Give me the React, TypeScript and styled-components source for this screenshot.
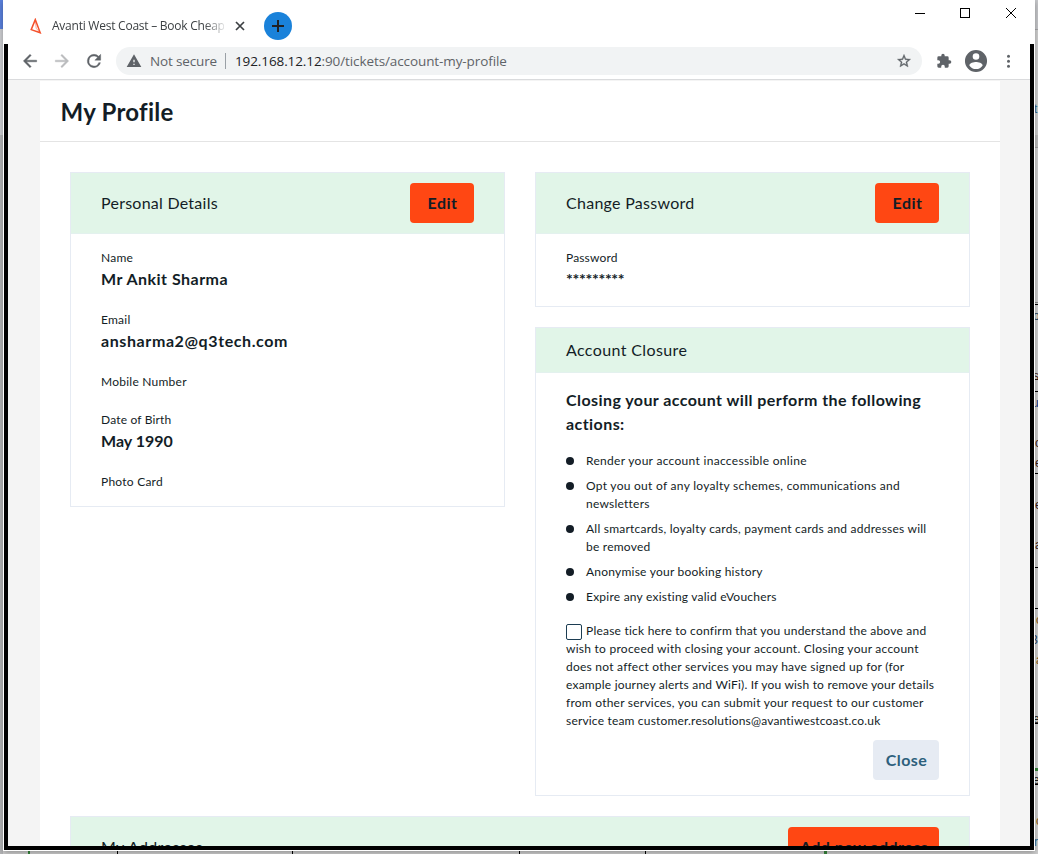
import React from 'react';
import styled, { createGlobalStyle, css } from 'styled-components';

const GlobalStyle = createGlobalStyle`
  * { box-sizing: border-box; }
  html, body { margin: 0; padding: 0; overflow: hidden; }
  body {
    font-family: Lato, 'Open Sans', sans-serif;
    font-variant-ligatures: none;
    color: #131d26;
  }
  h1, h2, h3, p, ul, dl, dt, dd { margin: 0; padding: 0; font-weight: 400; }
`;

/* ---------- desktop behind the window ---------- */
const Desktop = styled.div`
  position: relative;
  width: 1038px;
  height: 854px;
  overflow: hidden;
  background: #d0d0d0;
`;
const Slab = styled.div<{ $x: number; $y: number; $w: number; $h: number; $c: string }>`
  position: absolute;
  left: ${p => p.$x}px;
  top: ${p => p.$y}px;
  width: ${p => p.$w}px;
  height: ${p => p.$h}px;
  background: ${p => p.$c};
`;
const Fragment = styled.span<{ $y: number; $c?: string; $dx?: number }>`
  position: absolute;
  left: ${p => 1033 + (p.$dx || 0)}px;
  top: ${p => p.$y}px;
  font: 12px/14px 'Liberation Sans', sans-serif;
  color: ${p => p.$c || '#3b1c18'};
`;

const slabs: [number, number, number, number, string][] = [
  [0, 0, 3, 29, '#5a80dc'],
  [0, 29, 3, 106, '#cdced2'],
  [0, 135, 3, 719, '#b4b5b7'],
  [1035, 0, 3, 29, '#c6c7ca'],
  [1035, 29, 3, 1, '#a6a6a8'],
  [1035, 135, 3, 12, '#bdbdbd'],
  [1035, 147, 3, 1, '#a2a2a2'],
  [1035, 302, 3, 1, '#8a8a8a'],
  [1035, 304, 3, 1, '#000'],
  [1035, 379, 3, 1, '#000'],
  [1035, 391, 3, 1, '#000'],
  [1035, 473, 3, 1, '#000'],
  [1035, 567, 3, 1, '#000'],
  [1035, 608, 3, 1, '#000'],
  [1035, 723, 3, 1, '#000'],
  [1035, 768, 3, 3, '#37873b'],
  [1035, 784, 3, 1, '#000'],
  [28, 851, 2, 3, '#37873b'],
  [117, 851, 1, 3, '#000'],
  [292, 851, 1, 3, '#000'],
  [519, 851, 1, 3, '#000'],
  [645, 851, 1, 3, '#000'],
  [824, 851, 3, 3, '#37873b'],
];
const fragments: [string, number, string, number][] = [
  ['t', 102, '#2c6a94', 1],
  ['o', 309, '#274a63', 0],
  ['s', 369, '#3b1c18', 0],
  ['u', 396, '#173a80', -1],
  ['o', 436, '#3b1c18', 2],
  ['e', 456, '#3b1c18', 2],
  ['e', 498, '#3b1c18', 2],
  ['a', 538, '#3b1c18', 2],
  ['o', 613, '#8a5a10', 3],
  ['B', 633, '#27486a', -3],
  ['a', 653, '#8a5a10', 3],
  ['e', 712, '#222', 0],
  ['e', 773, '#222', 0],
  ['o', 814, '#8a5a10', 3],
  ['r', 835, '#2c6a94', 1],
];

/* ---------- browser window ---------- */
const Window = styled.div`
  position: absolute;
  left: 3px;
  top: 0;
  width: 1032px;
  height: 851px;
  display: flex;
  flex-direction: column;
  background: #fff;
  box-shadow: 0 2px 6px rgba(0, 0, 0, 0.3);
`;
const TabStrip = styled.div`
  height: 44px;
  flex: none;
  display: flex;
  align-items: flex-start;
  justify-content: space-between;
`;
const Tab = styled.div`
  display: flex;
  align-items: center;
  height: 28px;
  margin: 12px 0 0 26px;
`;
const TabTitle = styled.span`
  margin-left: 9px;
  width: 172px;
  overflow: hidden;
  white-space: nowrap;
  font: 12px/16px 'Open Sans', sans-serif;
  letter-spacing: -0.24px;
  color: #3c4043;
  mask-image: linear-gradient(to right, #000 152px, rgba(0, 0, 0, 0.15) 172px);
`;
const CloseTab = styled.svg`
  margin-left: 11px;
`;
const NewTab = styled.div`
  width: 28px;
  height: 28px;
  margin-left: 19px;
  border-radius: 50%;
  background: #1a82da;
  display: flex;
  align-items: center;
  justify-content: center;
`;
const WindowControls = styled.div`
  display: flex;
  gap: 34px;
  margin: 7px 18px 0 0;
`;
const Frame = styled.div`
  flex: 1;
  min-height: 0;
  margin: 0 1px 1px;
  border: 4px solid #000;
  border-top: 0;
  display: flex;
  flex-direction: column;
  overflow: hidden;
  background: #f4f4f4;
`;
const Toolbar = styled.div`
  height: 36px;
  flex: none;
  display: flex;
  align-items: flex-start;
  background: #fff;
  border-bottom: 1px solid #dadbdd;
  padding: 3px 0 0 12px;
`;
const ToolIcons = styled.div<{ $trailing?: boolean }>`
  display: flex;
  align-items: center;
  height: 28px;
  gap: 12px;
  ${p => p.$trailing && css`
    margin-left: 14px;
    gap: 11px;
  `}
`;
const AddressBar = styled.div`
  display: flex;
  align-items: center;
  width: 806px;
  height: 28px;
  margin-left: 12px;
  padding: 0 10px;
  border-radius: 14px;
  background: #f1f3f4;
  font: 13.5px/20px 'Open Sans', sans-serif;
  color: #5f6368;
`;
const Secure = styled.span`
  margin-left: 8px;
  width: 75px;
  letter-spacing: -0.15px;
  white-space: nowrap;
`;
const Url = styled.span`
  padding-left: 9px;
  flex: 1;
  border-left: 1px solid #9aa0a6;
  line-height: 16px;
  letter-spacing: -0.1px;
  b { font-weight: 400; color: #202124; }
`;

/* ---------- page ---------- */
const Page = styled.main`
  width: 960px;
  flex: 1;
  min-height: 0;
  margin: 1px 0 0 32px;
  background: #fff;
  overflow: hidden;
`;
const PageHead = styled.header`
  height: 61px;
  padding: 14px 0 0 20.5px;
  border-bottom: 1px solid #e4e4e4;
`;
const PageTitle = styled.h1`
  font-size: 24px;
  line-height: 34px;
  font-weight: 700;
  letter-spacing: 0.25px;
`;
const Columns = styled.div`
  display: flex;
  align-items: flex-start;
  gap: 30px;
  padding: 30px 30px 0;
`;
const Column = styled.div`
  display: flex;
  flex-direction: column;
  gap: 20px;
  width: 435px;
`;
const Card = styled.section<{ $h: number }>`
  height: ${p => p.$h}px;
  border: 1px solid #e6ebf3;
`;
const CardHead = styled.header<{ $h: number }>`
  height: ${p => p.$h}px;
  display: flex;
  align-items: center;
  justify-content: space-between;
  padding: 0 30px;
  background: #e1f5e8;
  border-bottom: 1px solid #e3f1ee;
`;
const CardTitle = styled.h2<{ $ls?: number }>`
  padding-bottom: 1px;
  font-size: 16px;
  line-height: 24px;
  letter-spacing: ${p => p.$ls ?? 0.25}px;
`;
const Button = styled.button<{ $w: number; $quiet?: boolean }>`
  width: ${p => p.$w}px;
  height: 40px;
  padding: 0 0 0 1px;
  border: 0;
  border-radius: 4px;
  font: 700 16px/24px Lato, sans-serif;
  letter-spacing: 0.45px;
  color: #131d26;
  background: #ff4713;
  white-space: nowrap;
  ${p => p.$quiet && css`
    color: #2d5f7c;
    background: #e6ebf3;
    letter-spacing: 0.4px;
  `}
`;
const Fields = styled.dl`
  padding: 15px 30px 0;
`;
const Field = styled.div<{ $h: number }>`
  height: ${p => p.$h}px;
`;
const Label = styled.dt<{ $ls?: number }>`
  font-size: 12px;
  line-height: 18px;
  letter-spacing: ${p => p.$ls ?? 0.24}px;
`;
const Value = styled.dd<{ $ls?: number }>`
  font-size: 16px;
  line-height: 24px;
  font-weight: 700;
  letter-spacing: ${p => p.$ls ?? 0}px;
`;
const Closure = styled.div`
  padding: 15px 30px 0;
`;
const ClosureTitle = styled.h3`
  font-size: 16px;
  line-height: 24px;
`;
const Line = styled.span<{ $ls?: number; $strong?: boolean }>`
  display: block;
  white-space: nowrap;
  font-weight: ${p => (p.$strong ? 700 : 400)};
  letter-spacing: ${p => p.$ls ?? 0.23}px;
`;
const Bullets = styled.ul`
  display: flex;
  flex-direction: column;
  gap: 7px;
  margin-top: 16px;
  list-style: none;
  font-size: 12px;
  line-height: 18px;
`;
const Bullet = styled.li`
  display: flex;
  gap: 12px;
  &::before {
    content: '';
    flex: none;
    width: 8px;
    height: 8px;
    margin-top: 5px;
    border-radius: 50%;
    background: #131d26;
  }
`;
const Confirm = styled.div`
  margin-top: 16px;
  font-size: 12px;
  line-height: 18px;
`;
const FirstLine = styled.div`
  display: flex;
  gap: 4px;
  height: 18px;
`;
const Checkbox = styled.span`
  flex: none;
  width: 16px;
  height: 16px;
  margin-top: 2px;
  border: 1px solid #1c3d52;
  border-radius: 2px;
  background: #fff;
`;
const Actions = styled.div`
  display: flex;
  justify-content: flex-end;
  margin-top: 10px;
`;
const Wide = styled.div`
  padding: 20px 30px 0;
`;

export default function App() {
  return (
    <>
      <GlobalStyle />
      <Desktop>
        {slabs.map(([x, y, w, h, c], i) => <Slab key={i} $x={x} $y={y} $w={w} $h={h} $c={c} />)}
        {fragments.map(([t, y, c, dx], i) => <Fragment key={i} $y={y} $c={c} $dx={dx}>{t}</Fragment>)}
        <Window>
          <TabStrip>
            <Tab>
              <svg width="14" height="16" viewBox="0 0 14 16" fill="none" stroke="#f4512c" strokeWidth="1.5">
                <path d="M6.3 1.6 L2.2 11.6 L11.2 14.8 Z" />
                <path d="M6.3 2 L7.2 10.3 L11 14.6" strokeWidth="0.5" />
              </svg>
              <TabTitle>Avanti West Coast – Book Cheap</TabTitle>
              <CloseTab width="10" height="10" viewBox="0 0 10 10" stroke="#3c4043" strokeWidth="1.7">
                <path d="M1 1 L9 9 M9 1 L1 9" />
              </CloseTab>
              <NewTab>
                <svg width="12" height="12" viewBox="0 0 12 12" stroke="#202124" strokeWidth="2"><path d="M6 0V12M0 6H12" /></svg>
              </NewTab>
            </Tab>
            <WindowControls>
              <svg width="12" height="12" viewBox="0 0 12 12" stroke="#000"><path d="M2 6.5H12" /></svg>
              <svg width="12" height="12" viewBox="0 0 12 12" fill="none" stroke="#000"><rect x="1.5" y="1.5" width="9" height="9" /></svg>
              <svg width="12" height="12" viewBox="0 0 12 12" stroke="#000"><path d="M1 1L11 11M11 1L1 11" /></svg>
            </WindowControls>
          </TabStrip>
          <Frame>
            <Toolbar>
              <ToolIcons>
                <svg width="20" height="20" viewBox="0 0 24 24" fill="#5f6368" stroke="#5f6368" strokeWidth="0.5"><path d="M20 11H7.83l5.59-5.59L12 4l-8 8 8 8 1.41-1.41L7.83 13H20z" /></svg>
                <svg width="20" height="20" viewBox="0 0 24 24" fill="#babcbe" stroke="#babcbe" strokeWidth="0.5"><path d="M12 4l-1.41 1.41L16.17 11H4v2h12.17l-5.58 5.59L12 20l8-8z" /></svg>
                <svg width="20" height="20" viewBox="0 0 24 24" fill="#5f6368" stroke="#5f6368" strokeWidth="0.5"><path d="M17.65 6.35A7.96 7.96 0 0 0 12 4a8 8 0 1 0 7.73 10h-2.08A6 6 0 1 1 12 6c1.66 0 3.14.69 4.22 1.78L13 11h7V4z" /></svg>
              </ToolIcons>
              <AddressBar>
                <svg width="16" height="16" viewBox="0 0 24 24" fill="#5f6368"><path d="M1 21h22L12 2zm12-3h-2v-2h2zm0-4h-2v-4h2z" /></svg>
                <Secure>Not secure</Secure>
                <Url><b>192.168.12.12</b>:90/tickets/account-my-profile</Url>
                <svg width="16" height="16" viewBox="0 0 24 24" fill="#5f6368" stroke="#5f6368" strokeWidth="0.5"><path d="M22 9.24l-7.19-.62L12 2 9.19 8.63 2 9.24l5.46 4.73L5.82 21 12 17.27 18.18 21l-1.63-7.03zM12 15.4l-3.76 2.27 1-4.28-3.32-2.88 4.38-.38L12 6.1l1.71 4.04 4.38.38-3.32 2.88 1 4.28z" /></svg>
              </AddressBar>
              <ToolIcons $trailing>
                <svg width="16" height="16" viewBox="0 0 24 24" fill="#5f6368"><path d="M20.5 11H19V7a2 2 0 0 0-2-2h-4V3.500a2.500 2.500 0 0 0-5 0V5H4a2 2 0 0 0-1.990 2v3.800H3.500a2.700 2.700 0 0 1 0 5.400H2V20a2 2 0 0 0 2 2h3.800v-1.500a2.700 2.700 0 0 1 5.400 0V22H17a2 2 0 0 0 2-2v-4h1.500a2.500 2.500 0 0 0 0-5z" /></svg>
                <svg width="26" height="26" viewBox="2 2 20 20" fill="#5f6368"><path d="M12 3.500a8.500 8.500 0 1 0 0 17 8.500 8.500 0 1 0 0-17zM12 6a2.550 2.550 0 1 1 0 5.100A2.550 2.550 0 0 1 12 6zm0 12.200a6.200 6.200 0 0 1-5.100-2.800c0-1.700 3.400-2.600 5.100-2.600s5.100.9 5.100 2.600A6.200 6.200 0 0 1 12 18.200z" fillRule="evenodd" /></svg>
                <svg width="16" height="16" viewBox="0 0 16 16" fill="#5f6368"><circle cx="8.500" cy="3.200" r="1.500" /><circle cx="8.500" cy="8.200" r="1.500" /><circle cx="8.500" cy="13.200" r="1.500" /></svg>
              </ToolIcons>
            </Toolbar>
            <Page>
              <PageHead><PageTitle>My Profile</PageTitle></PageHead>
              <Columns>
                <Column>
                  <Card $h={335}>
                    <CardHead $h={61}>
                      <CardTitle>Personal Details</CardTitle>
                      <Button $w={64}>Edit</Button>
                    </CardHead>
                    <Fields>
                      <Field $h={62}><Label>Name</Label><Value $ls={0.48}>Mr Ankit Sharma</Value></Field>
                      <Field $h={62}><Label>Email</Label><Value $ls={0.6}>ansharma2@q3tech.com</Value></Field>
                      <Field $h={38}><Label>Mobile Number</Label></Field>
                      <Field $h={62}><Label $ls={0.18}>Date of Birth</Label><Value>May 1990</Value></Field>
                      <Field $h={20}><Label>Photo Card</Label></Field>
                    </Fields>
                  </Card>
                </Column>
                <Column>
                  <Card $h={135}>
                    <CardHead $h={61}>
                      <CardTitle $ls={0.28}>Change Password</CardTitle>
                      <Button $w={64}>Edit</Button>
                    </CardHead>
                    <Fields>
                      <Field $h={50}><Label $ls={0.15}>Password</Label><Value $ls={-0.32}>*********</Value></Field>
                    </Fields>
                  </Card>
                  <Card $h={469}>
                    <CardHead $h={45}><CardTitle $ls={0.38}>Account Closure</CardTitle></CardHead>
                    <Closure>
                      <ClosureTitle>
                        <Line $strong $ls={0.42}>Closing your account will perform the following</Line>
                        <Line $strong $ls={0.43}>actions:</Line>
                      </ClosureTitle>
                      <Bullets>
                        <Bullet><Line $ls={0.3}>Render your account inaccessible online</Line></Bullet>
                        <Bullet><div><Line $ls={0.28}>Opt you out of any loyalty schemes, communications and</Line><Line>newsletters</Line></div></Bullet>
                        <Bullet><div><Line>All smartcards, loyalty cards, payment cards and addresses will</Line><Line>be removed</Line></div></Bullet>
                        <Bullet><Line>Anonymise your booking history</Line></Bullet>
                        <Bullet><Line>Expire any existing valid eVouchers</Line></Bullet>
                      </Bullets>
                      <Confirm>
                        <FirstLine><Checkbox /><Line $ls={0.22}>Please tick here to confirm that you understand the above and</Line></FirstLine>
                        <Line $ls={0.26}>wish to proceed with closing your account. Closing your account</Line>
                        <Line $ls={0.24}>does not affect other services you may have signed up for (for</Line>
                        <Line $ls={0.2}>example journey alerts and WiFi). If you wish to remove your details</Line>
                        <Line $ls={0.23}>from other services, you can submit your request to our customer</Line>
                        <Line $ls={0.18}>service team customer.resolutions@avantiwestcoast.co.uk</Line>
                      </Confirm>
                      <Actions><Button $w={66} $quiet>Close</Button></Actions>
                    </Closure>
                  </Card>
                </Column>
              </Columns>
              <Wide>
                <Card $h={100}>
                  <CardHead $h={61}>
                    <CardTitle $ls={0.32}>My Addresses</CardTitle>
                    <Button $w={151}>Add new address</Button>
                  </CardHead>
                </Card>
              </Wide>
            </Page>
          </Frame>
        </Window>
      </Desktop>
    </>
  );
}
